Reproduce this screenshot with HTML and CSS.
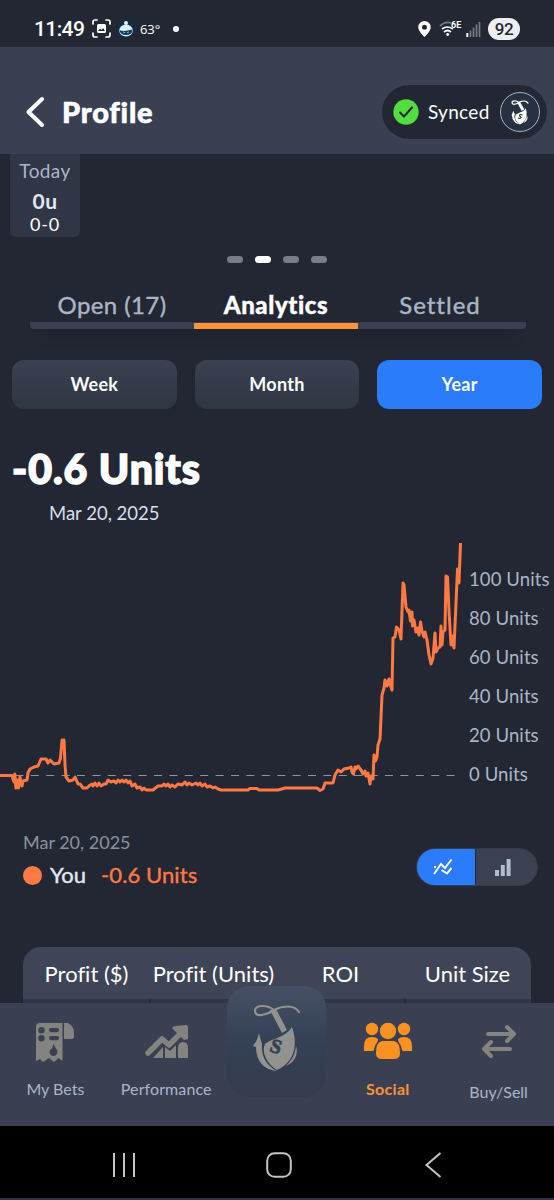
FILE: index.html
```html
<!DOCTYPE html>
<html lang="en">
<head>
    <meta charset="UTF-8">
    <meta name="viewport" content="width=device-width, initial-scale=1.0">
    <title>Profile</title>
    <link rel="stylesheet" href="styles.css">
</head>
<body>
    <div class="status-bar">
        <span class="clock">11:49</span>
        <svg class="shot-icon" width="19" height="19" viewBox="0 0 19 19">
            <path d="M1 5V3Q1 1 3 1H5M14 1H16Q18 1 18 3V5M18 14V16Q18 18 16 18H14M5 18H3Q1 18 1 16V14" fill="none" stroke="#fff" stroke-width="1.7" stroke-linecap="round"/>
            <rect x="5" y="5" width="9" height="9" rx="1.5" fill="#fff"/>
            <path d="M6 12L8 9.5L9.5 11L11 9L13 12Z" fill="#232733"/>
        </svg>
        <svg class="bot-icon" width="18" height="20" viewBox="0 0 18 20">
            <circle cx="9" cy="10" r="9" fill="#102c4b"/>
            <circle cx="9" cy="4" r="2" fill="#dff2f8"/>
            <ellipse cx="9" cy="11.5" rx="6.8" ry="6" fill="#dff2f8"/>
            <path d="M2.5 11Q6 13 15.5 10.5Q15.5 16 9 16Q3 16 2.5 11Z" fill="#153b59"/>
            <path d="M6 13L8 13.7M12 13L10 13.7" stroke="#52c9f5"/>
        </svg>
        <span class="temp">63°</span>
        <span class="notif-dot"></span>
        <div class="status-right">
            <svg width="13" height="16" viewBox="0 0 13 16"><path d="M6.5 0A6.2 6.2 0 0 0 .3 6.2C.3 10.5 6.5 16 6.5 16S12.7 10.5 12.7 6.2A6.2 6.2 0 0 0 6.5 0ZM6.5 3.8A2.5 2.5 0 1 1 6.5 8.8A2.5 2.5 0 1 1 6.5 3.8Z" fill="#fff"/></svg>
            <svg class="wifi" width="23" height="16" viewBox="0 0 23 16">
                <path d="M1 5Q6 0 12 2" fill="none" stroke="#777b84" stroke-width="1.7"/>
                <path d="M3 8Q8 4 14 8M5 11Q8.5 8 12 11" fill="none" stroke="#fff" stroke-width="1.7"/>
                <circle cx="8.7" cy="13.5" r="1.4" fill="#fff"/>
                <text class="wifi-text" x="12" y="7">6E</text>
            </svg>
            <svg class="signal" width="15" height="16" viewBox="0 0 15 16">
                <path d="M1.3 12V16" stroke="#fff" stroke-width="2"/>
                <path d="M4.5 9.5V16M7.5 6.5V16M10.5 3.5V16M13.5 1V16" stroke="#777b84" stroke-width="1.7"/>
            </svg>
            <span class="battery">92</span>
        </div>
    </div>

    <header class="header">
        <svg class="back" width="20" height="32" viewBox="0 0 20 32"><path d="M17 3L3.5 16L17 29" fill="none" stroke="#fff" stroke-width="4" stroke-linecap="round" stroke-linejoin="round"/></svg>
        <h1>Profile</h1>
        <div class="sync">
            <svg width="26" height="26" viewBox="0 0 26 26"><circle cx="13" cy="13" r="12.7" fill="#54de3d"/><path d="M7 13.5L11 17.5L19 8.5" fill="none" stroke="#232733" stroke-width="2" stroke-linecap="round"/></svg>
            <span>Synced</span>
            <div class="avatar">
                <svg width="18" height="25" viewBox="0 0 50 68">
                    <path d="M47 8C42 0 30 2 22 6C15 11 3 14 3 7C3 0 16 1 22 6" fill="none" stroke="currentColor" stroke-width="3.5" stroke-linecap="round"/>
                    <path d="M17 6L25 5L37 25L30 30Z" fill="currentColor"/>
                    <path d="M41 22C46 38 45 58 25 67C13 60 9 48 13 40C21 34 33 34 41 22Z" fill="currentColor"/>
                    <path d="M7 29L11 40L9 42C9 52 15 62 25 67C12 65 3 56 3 42L1 42Z" fill="currentColor"/>
                    <path d="M44 42C49 50 43 60 34 63C41 55 43 50 44 42Z" fill="currentColor"/>
                    <path d="M32 41C27 38 23 40 24 43C25 46 29 44 28 48C27 51 22 51 19 49" fill="none" stroke="#263141" stroke-width="3"/>
                </svg>
            </div>
        </div>
    </header>

    <main>
        <div class="today">
            <span class="today-label">Today</span>
            <span class="today-units">0u</span>
            <span class="today-record">0-0</span>
        </div>
        <div class="dots"><i></i><i class="on"></i><i></i><i></i></div>

        <div class="tabs">
            <div class="tab">Open (17)</div>
            <div class="tab active">Analytics</div>
            <div class="tab">Settled</div>
        </div>

        <div class="ranges">
            <button>Week</button>
            <button class="month">Month</button>
            <button class="selected">Year</button>
        </div>

        <h2>-0.6 Units</h2>
        <div class="date">Mar 20, 2025</div>

        <div class="chart">
            <svg width="464" height="270" viewBox="0 535 464 270">
                <path d="M0 775.5H456" stroke="#8f949e" stroke-width="1.2" stroke-dasharray="8 7.4"/>
                <polyline class="line" points="0,775.5 12,775.5 14,782 14.8,774 16,788 17.5,780 18.5,788 20,777 22,786 23,781 27,780 28,773 30,769 34,767 38,766 41,759 46,759 48,763 50,760 54,764 59,763 60.5,758 62,740 64,740 65,765 66,777 69,781 73,780 75,777 78,784 80,784 83,788 87,788 90,785 92,784 93,786 95,783 97,786 99,783 101,786 104,784 106,784 108,780 111,782 114,781 116,783 118,780 120,782 122,780 124,782 126,780 128,783 130,781 132,786 135,784 137,788 140,787 142,790 144,788 146,790 153,790 158,786 162,786 164,784 166,786 168,784 170,787 172,785 175,787 178,784 182,785 185,782 187,785 189,783 192,785 196,783 198,785 200,783 202,786 205,784 207,787 210,786 213,788 215,787 218,789 221,790 248,790 250,788.5 257,788.5 259,790 278,790 285,788 317,788 320,790.5 323,789 325,783 333,783 335,775 338,770 341,772 344,769 349,768 351,767 352,772 353.5,774 355,767 356,769 358,766 361,770 363,774 365,771 366,776 368,773 370,784 371,776 373,779 374,755 375.5,761 377,757 378,745 380,739 382,695 384,688 385,680 387,686 389,679 390,684 392,690 393,638 395,637 396.5,627 399,630 401,639 403,583 404,585 406,607 408,612 409,610 410.5,621 412,612 412.5,626 414,620 416,632 418,628 419,635 420.5,622 422,631 424,637 425,632 427,640 429,655 431,664 433,658 435,633 436,652 438,648 440,647 441,626 442,645 443,632 445,630 446,576 447.5,577 449,611 451,645 452,636 454,648 457.5,569 459,583 460.5,543"/>
            </svg>
            <div class="axis">
                <span>100 Units</span><span>80 Units</span><span>60 Units</span><span>40 Units</span><span>20 Units</span><span>0 Units</span>
            </div>
        </div>

        <div class="legend">
            <div class="legend-text">
                <div class="legend-date">Mar 20, 2025</div>
                <div class="legend-row"><i class="bullet"></i><span class="you">You</span><span class="amount">-0.6 Units</span></div>
            </div>
            <div class="toggle">
                <div class="toggle-item on"><svg width="20" height="18" viewBox="0 0 20 18"><path d="M1 16L8 6L12 10L18.5 1.5M8.5 12L14 15.5L18.5 10" fill="none" stroke="#fff" stroke-width="2"/><circle cx="2" cy="9" r="1.2" fill="#fff"/></svg></div>
                <div class="toggle-item"><svg width="16" height="17" viewBox="0 0 16 17"><path d="M0 11H4V17H0ZM5.8 6H9.8V17H5.8ZM11.6 0H15.6V17H11.6Z" fill="#b1bdd0"/></svg></div>
            </div>
        </div>

        <div class="table">
            <div class="table-head">
                <span>Profit ($)</span><span>Profit (Units)</span><span>ROI</span><span>Unit Size</span>
            </div>
            <div class="table-row"><i></i><i></i><i></i><i></i></div>
        </div>
    </main>

    <nav class="nav">
        <div class="nav-item">
            <svg width="40" height="42" viewBox="0 0 40 42">
                <path fill-rule="evenodd" d="M5 1H27.5V39L23.5 36L19 40L14 36L8 40L5 37L1 39V5Q1 1 5 1ZM6.5 5A3.2 3.2 0 1 0 6.5 11.4A3.2 3.2 0 1 0 6.5 5ZM6.5 13A3.2 3.2 0 1 0 6.5 19.4A3.2 3.2 0 1 0 6.5 13ZM16 6A2 2 0 0 0 16 10.2H22A2 2 0 0 0 22 6ZM16 14A2 2 0 0 0 16 18.2H22A2 2 0 0 0 22 14ZM18.5 22Q20 25 22 28A4 4 0 1 1 15 28Q18 26 18.5 22Z" fill="#83837f"/>
                <path d="M29 1H33Q39 4 39 11V15Q39 17 37 17H29Z" fill="#83837f"/>
            </svg>
            <span>My Bets</span>
        </div>
        <div class="nav-item performance">
            <svg width="44" height="36" viewBox="0 0 44 36">
                <path d="M3 29L17 15L24 21L37 8" fill="none" stroke="#83837f" stroke-width="5.5" stroke-linecap="round" stroke-linejoin="round"/>
                <path d="M27 4Q28 2 31 2L41 1Q43 1 43 3V15L39 16ZM8 34L18 23V34ZM20 23L25 27L31 21V34H20ZM33 34V24Q33 18 38 18Q43 18 43 24V34Z" fill="#83837f"/>
            </svg>
            <span>Performance</span>
        </div>
        <div class="nav-item center">
            <div class="hook-button">
                <svg width="50" height="68" viewBox="0 0 50 68">
                    <path d="M47 8C42 0 30 2 22 6C15 11 3 14 3 7C3 0 16 1 22 6" fill="none" stroke="currentColor" stroke-width="2.2" stroke-linecap="round"/>
                    <path d="M18 6L24 5L35 26L30 29Z" fill="currentColor"/>
                    <path d="M40 23C45 38 45 57 25 66C15 60 9 48 13 40C20 34 33 34 40 23Z" fill="currentColor"/>
                    <path d="M7 29C8 33 9 37 10 40C9 52 14 61 25 67C12 66 4 57 4 43L1 42C4 38 6 34 7 29Z" fill="currentColor"/>
                    <path d="M44 42C47 50 42 59 34 62C41 55 43 50 44 42Z" fill="currentColor"/>
                    <text class="hook-letter" x="24" y="49" text-anchor="middle" transform="rotate(18 24 43)">S</text>
                </svg>
            </div>
        </div>
        <div class="nav-item social">
            <svg width="50" height="38" viewBox="0 0 50 38">
                <g fill="#fa9123">
                    <circle cx="9" cy="7" r="6.2"/><circle cx="41" cy="7" r="6.2"/><circle cx="25" cy="9" r="8.2"/>
                    <path d="M1 29V24Q1 15 9 15Q13 15 15 17C15 21 12 21 11 28Q11 29 9 29ZM49 29V24Q49 15 41 15Q37 15 35 17C35 21 38 21 39 28Q39 29 41 29Z"/>
                    <path d="M19 19H31Q37 20 37 31Q37 37 31 37H19Q13 37 13 31Q13 20 19 19Z"/>
                </g>
            </svg>
            <span>Social</span>
        </div>
        <div class="nav-item trade">
            <svg width="38" height="36" viewBox="0 0 38 36"><path d="M8 10H34M27 3L34 10L27 17M30 25H4M11 18L4 25L11 32" fill="none" stroke="#83837f" stroke-width="4" stroke-linecap="round" stroke-linejoin="round"/></svg>
            <span>Buy/Sell</span>
        </div>
    </nav>

    <div class="system-bar">
        <svg width="24" height="26" viewBox="0 0 24 26"><path d="M2 1V25M12 1V25M22 1V25" stroke="#c4c4c4" stroke-width="2"/></svg>
        <svg class="home" width="26" height="26" viewBox="0 0 26 26"><rect x="1.2" y="1.2" width="23.6" height="23.6" rx="7.5" fill="none" stroke="#c4c4c4" stroke-width="2"/></svg>
        <svg width="18" height="26" viewBox="0 0 18 26"><path d="M16.5 1L2.5 13L16.5 25" fill="none" stroke="#c4c4c4" stroke-width="2"/></svg>
    </div>
</body>
</html>
```
FILE: styles.css
```css
* {
    box-sizing: border-box;
}
body {
    display: flex;
    flex-direction: column;
    width: 554px;
    height: 1200px;
    margin: 0;
    overflow: hidden;
    background-color: #232733;
    font-family: Lato, sans-serif;
    font-variant-ligatures: none;
    color: #fff;
}
svg {
    display: block;
    flex: none;
}
.hook-letter {
    font: bold 20px "Liberation Serif", serif;
    fill: #354257;
    stroke: #354257;
    stroke-width: 0.8px;
}

/* Status bar */
.status-bar {
    display: flex;
    align-items: center;
    flex: none;
    height: 47px;
    padding: 10px 34px 0 34px;
}
.clock {
    width: 51px;
    font: 500 21px Roboto, sans-serif;
    letter-spacing: -0.6px;
}
.shot-icon {
    margin-left: 7px;
}
.bot-icon {
    margin-left: 6px;
}
.temp {
    width: 21px;
    margin-left: 5px;
    font: 13px "Open Sans", sans-serif;
    letter-spacing: -0.1px;
}
.notif-dot {
    width: 6px;
    height: 6px;
    margin-left: 12px;
    border-radius: 50%;
    background: #fff;
}
.status-right {
    display: flex;
    align-items: center;
    margin-left: auto;
}
.wifi {
    margin-left: 8px;
}
.wifi-text {
    font: bold 9px Roboto, sans-serif;
    fill: #fff;
}
.signal {
    margin-left: 4px;
}
.battery {
    width: 32px;
    margin-left: 7px;
    border-radius: 11px;
    background: #edeff2;
    color: #232733;
    font: 500 17px/22px Roboto, sans-serif;
    letter-spacing: -0.5px;
    text-align: center;
}

/* Header */
.header {
    display: flex;
    align-items: center;
    flex: none;
    height: 107px;
    padding: 23px 7px 0 25px;
    background: #3a4052;
}
h1 {
    margin: 0 0 0 17px;
    font-size: 29px;
    font-weight: 900;
    line-height: 36px;
    letter-spacing: 0.8px;
    -webkit-text-stroke: 0.6px #fff;
}
.sync {
    display: flex;
    align-items: center;
    width: 165px;
    height: 54px;
    margin-left: auto;
    padding: 0 7px 0 11px;
    border-radius: 27px;
    background: #232733;
}
.sync span {
    width: 63px;
    margin-left: 9px;
    font-size: 19px;
    line-height: 28px;
    letter-spacing: 0.3px;
}
.avatar {
    display: flex;
    align-items: center;
    justify-content: center;
    width: 40px;
    height: 40px;
    margin-left: 9px;
    border: 1.5px solid #a5b4cc;
    border-radius: 50%;
    background: #263141;
}

main {
    flex: none;
    height: 849px;
    overflow: hidden;
}
.today {
    display: flex;
    flex-direction: column;
    align-items: center;
    width: 70px;
    height: 83px;
    margin-left: 10px;
    padding-top: 5px;
    border-radius: 0 0 6px 6px;
    background: #303645;
}
.today-label {
    color: #aab5c8;
    font-size: 19px;
    line-height: 23px;
    letter-spacing: 0.4px;
}
.today-units {
    margin-top: 6px;
    color: #e1e7f4;
    font-size: 21px;
    font-weight: bold;
    line-height: 25px;
    letter-spacing: 0.5px;
}
.today-record {
    font-size: 18px;
    line-height: 22px;
    letter-spacing: 0.8px;
}
.dots {
    display: flex;
    justify-content: center;
    gap: 12px;
    margin-top: 19px;
}
.dots i {
    width: 16px;
    height: 7px;
    border-radius: 4px;
    background: #787d88;
}
.dots .on {
    background: #fff;
}

/* Tabs */
.tabs {
    display: flex;
    width: 496px;
    height: 38px;
    margin: 28px 0 0 30px;
    border-bottom: 7px solid #3a4052;
    border-radius: 4px;
    box-shadow: 0 16px 12px -10px rgba(20, 24, 30, 0.25);
}
.tab {
    flex: 1;
    height: 38px;
    color: #aab5c8;
    font-size: 24px;
    line-height: 28px;
    letter-spacing: 0.4px;
    text-align: center;
    -webkit-text-stroke: 0.4px #aab5c8;
}
.tab:last-child {
    padding-right: 4px;
    letter-spacing: 1px;
}
.tab.active {
    border-bottom: 6px solid #fa9236;
    color: #fff;
    font-weight: 900;
    letter-spacing: 0.6px;
    -webkit-text-stroke: 0.4px #fff;
}
.ranges {
    display: flex;
    gap: 18px;
    margin: 31px 12px 0;
}
.ranges button {
    flex: 1;
    height: 49px;
    padding: 0 0 1px;
    border: 0;
    border-radius: 12px;
    background: linear-gradient(#3b4150, #2e3543);
    color: #fff;
    font: bold 18px Lato, sans-serif;
    letter-spacing: 0.3px;
}
.ranges .selected {
    background: #2b7cfb;
}
h2 {
    margin: 38px 0 0 12px;
    font-size: 41px;
    font-weight: 900;
    line-height: 44px;
    letter-spacing: 0.9px;
    -webkit-text-stroke: 1.5px #fff;
}
.date {
    margin: 10px 0 0 49px;
    color: #d8deed;
    font-size: 18.5px;
    line-height: 24px;
}

/* Chart */
.chart {
    display: flex;
    height: 270px;
    margin-top: 10px;
}
.line {
    fill: none;
    stroke: #ff7944;
    stroke-width: 3;
    stroke-linejoin: round;
}
.axis {
    display: flex;
    flex-direction: column;
    margin: 25px 0 0 5px;
    color: #aab5c8;
    font-size: 18.5px;
    line-height: 39px;
    letter-spacing: 0.1px;
    white-space: nowrap;
}
.legend {
    display: flex;
    justify-content: space-between;
    height: 60px;
    margin: 26px 16px 0 23px;
}
.legend-date {
    color: #8a91a0;
    font-size: 18px;
    line-height: 23px;
}
.legend-row {
    display: flex;
    align-items: center;
    margin-top: 6px;
    font-size: 22px;
    line-height: 30px;
}
.bullet {
    width: 19px;
    height: 19px;
    border-radius: 50%;
    background: #ff7944;
}
.you {
    width: 36px;
    margin-left: 8px;
    color: #e1e7f4;
    -webkit-text-stroke: 0.4px #e1e7f4;
}
.amount {
    margin-left: 15px;
    color: #ff7944;
    letter-spacing: 0.1px;
    -webkit-text-stroke: 0.4px #ff7944;
}
.toggle {
    display: flex;
    width: 122px;
    height: 38px;
    margin-top: 17px;
    overflow: hidden;
    border: 1px solid #363b47;
    border-radius: 19px;
    background: #3b4150;
}
.toggle-item {
    display: flex;
    align-items: center;
    flex: 1;
    padding-left: 19px;
}
.toggle-item.on {
    padding-left: 16px;
    border-right: 1px solid #232733;
    background: #2b7cfb;
}

/* Stats table */
.table {
    width: 508px;
    margin: 56px 0 0 23px;
}
.table-head {
    display: grid;
    grid-template-columns: repeat(4, 1fr);
    height: 52px;
    border-radius: 18px 18px 0 0;
    background: #3f4556;
    font-size: 22px;
    line-height: 53px;
    text-align: center;
    white-space: nowrap;
}
.table-row {
    display: grid;
    grid-template-columns: repeat(4, 1fr);
    gap: 2px;
    height: 5px;
    background: #272b37;
}
.table-row i {
    background: #303645;
}

/* Bottom nav */
.nav {
    display: grid;
    grid-template-columns: repeat(5, 1fr);
    flex: none;
    height: 123px;
    background: #3a4052;
}
.nav-item {
    display: flex;
    flex-direction: column;
    align-items: center;
    justify-content: space-between;
    height: 97px;
    padding-top: 19px;
    color: #aab5c8;
    font-size: 16px;
    line-height: 22px;
}
.performance {
    padding-top: 21px;
    letter-spacing: 0.1px;
}
.performance svg {
    margin-left: 2px;
}
.nav-item.center {
    position: relative;
}
.hook-button {
    position: absolute;
    top: -17px;
    display: flex;
    justify-content: center;
    width: 99px;
    height: 111px;
    padding-top: 18px;
    border-radius: 22px;
    background: linear-gradient(#465064, #344156 50%, #343b4c);
    color: #92928f;
}
.nav-item.social span {
    color: #fa9236;
    font-weight: bold;
    letter-spacing: 0.3px;
}
.trade {
    height: 100px;
    padding-top: 21px;
}

/* Android buttons */
.system-bar {
    display: flex;
    justify-content: space-between;
    flex: none;
    height: 74px;
    padding: 26px 112px 0;
    border-bottom: 2px solid #2d3341;
    background: #000;
}
.home {
    margin-right: 3px;
}
```
